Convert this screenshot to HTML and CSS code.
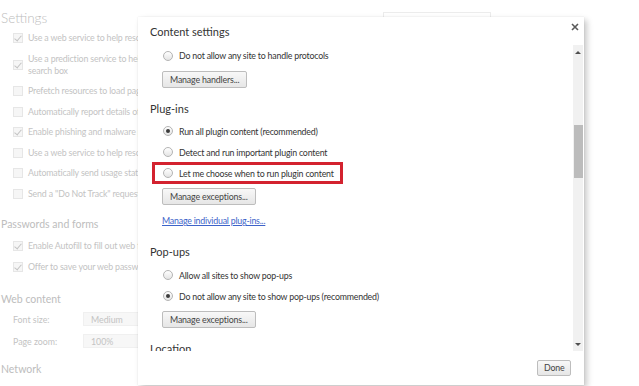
FILE: index.html
```html
<!DOCTYPE html>
<html>
<head>
<meta charset="utf-8">
<link rel="stylesheet" href="styles.css">
</head>
<body>
<div class="page">
  <header class="page-head">
    <h1 class="page-title">Settings</h1>
    <div class="search"></div>
  </header>
  <ul class="checks">
    <li class="check on"><span class="box"></span><span class="ctext">Use a web service to help resolve navigation errors</span></li>
    <li class="check on"><span class="box"></span><span class="ctext">Use a prediction service to help complete searches and URLs typed in the address bar or the app launcher<br>search box</span></li>
    <li class="check"><span class="box"></span><span class="ctext">Prefetch resources to load pages more quickly</span></li>
    <li class="check"><span class="box"></span><span class="ctext">Automatically report details of possible security incidents</span></li>
    <li class="check on"><span class="box"></span><span class="ctext">Enable phishing and malware protection</span></li>
    <li class="check"><span class="box"></span><span class="ctext">Use a web service to help resolve spelling errors</span></li>
    <li class="check"><span class="box"></span><span class="ctext">Automatically send usage statistics and crash reports</span></li>
    <li class="check"><span class="box"></span><span class="ctext">Send a "Do Not Track" request with your browsing traffic</span></li>
  </ul>
  <h2 class="page-sec sec-pw">Passwords and forms</h2>
  <ul class="checks checks-pw">
    <li class="check on"><span class="box"></span><span class="ctext">Enable Autofill to fill out web forms in a single click</span></li>
    <li class="check on"><span class="box"></span><span class="ctext">Offer to save your web passwords</span></li>
  </ul>
  <h2 class="page-sec sec-web">Web content</h2>
  <div class="field f1"><span class="flabel">Font size:</span><span class="select">Medium</span></div>
  <div class="field f2"><span class="flabel">Page zoom:</span><span class="select">100%</span></div>
  <h2 class="page-sec sec-net">Network</h2>
</div>

<div class="dialog">
  <div class="dlg-title">Content settings</div>
  <button class="close" aria-label="Close"><svg width="10" height="10" viewBox="0 0 10 10"><path d="M2 2 L8 8 M8 2 L2 8" stroke="#5a5a5a" stroke-width="1.6" fill="none"/></svg></button>
  <div class="dlg-body">
    <div class="scroll-content">
      <div class="radio"><span class="dot"></span>Do not allow any site to handle protocols</div>
      <button class="btn b1">Manage handlers...</button>

      <h3 class="sec s-plug">Plug-ins</h3>
      <div class="radios r-plug">
        <div class="radio on"><span class="dot"></span>Run all plugin content (recommended)</div>
        <div class="radio"><span class="dot"></span>Detect and run important plugin content</div>
        <div class="radio marked"><span class="dot"></span>Let me choose when to run plugin content</div>
      </div>
      <button class="btn b2">Manage exceptions...</button>
      <a class="link" href="#">Manage individual plug-ins...</a>

      <h3 class="sec s-pop">Pop-ups</h3>
      <div class="radios r-pop">
        <div class="radio"><span class="dot"></span>Allow all sites to show pop-ups</div>
        <div class="radio on"><span class="dot"></span>Do not allow any site to show pop-ups (recommended)</div>
      </div>
      <button class="btn b3">Manage exceptions...</button>

      <h3 class="sec s-loc">Location</h3>
    </div>
    <div class="scrollbar">
      <span class="arrow up"></span>
      <span class="track"><span class="thumb"></span></span>
      <span class="arrow down"></span>
    </div>
  </div>
  <div class="dlg-foot">
    <button class="btn done">Done</button>
  </div>
</div>
</body>
</html>
```

FILE: styles.css
```css
html, body {
  margin: 0;
  padding: 0;
}
body {
  width: 639px;
  height: 386px;
  overflow: hidden;
  background: #ffffff;
  font-family: Lato, "Open Sans", sans-serif;
  position: relative;
}

/* ---------- faded settings page ---------- */
.page {
  color: #c3c3c3;
  white-space: nowrap;
}
.page-head {
  display: flex;
  align-items: flex-start;
  height: 28px;
}
.page-title {
  margin: 9px 0 0 1px;
  font-size: 13.5px;
  line-height: 18px;
  font-weight: 300;
  color: #bdbdbd;
}
.search {
  margin-left: auto;
  margin-right: 148px;
  margin-top: 12px;
  width: 106px;
  height: 20px;
  border: 1px solid #ececec;
}
.checks {
  list-style: none;
  margin: 0;
  padding: 0 0 0 13px;
}
.check {
  display: flex;
  align-items: center;
  padding: 4.25px 0;
  line-height: 12px;
  font-size: 8.8px;
  letter-spacing: -0.15px;
}
.box {
  width: 8px;
  height: 8px;
  border: 1px solid #e6e6e6;
  background: #f6f6f6;
  margin-right: 5px;
  flex: none;
  position: relative;
}
.check.on .box::after {
  content: "";
  position: absolute;
  left: 2px;
  top: 0px;
  width: 3px;
  height: 6px;
  border-right: 1.5px solid #c4c4c4;
  border-bottom: 1.5px solid #c4c4c4;
  transform: rotate(40deg);
}
.page-sec {
  margin: 0 0 0 1px;
  font-size: 10.5px;
  font-weight: 400;
  line-height: 16px;
  color: #bdbdbd;
}
.sec-pw { margin-top: 12px; }
.checks-pw { margin-top: 4px; }
.sec-web { margin-top: 14px; }
.field {
  display: flex;
  align-items: center;
  padding-left: 13px;
  height: 14px;
  font-size: 8.8px;
}
.f1 { margin-top: 5px; }
.f2 { margin-top: 8px; }
.flabel { width: 70px; }
.select {
  height: 14px;
  line-height: 14px;
  width: 60px;
  padding-left: 7px;
  background: #f7f7f7;
  border: 1px solid #f0f0f0;
  box-sizing: border-box;
}
.sec-net { margin-top: 13px; }

/* ---------- dialog ---------- */
.dialog {
  position: absolute;
  left: 138px;
  top: 17px;
  width: 446px;
  height: 368px;
  background: #ffffff;
  box-shadow: 0 0 1px rgba(0,0,0,0.12), 3px 3px 6px rgba(0,0,0,0.22);
  display: flex;
  flex-direction: column;
  color: #333333;
}
.dialog > * { flex: none; }
.dlg-title {
  padding: 8px 0 0 12px;
  height: 20px;
  line-height: 14px;
  font-size: 11px;
  color: #333;
}
.close {
  position: absolute;
  top: 5px;
  right: 4px;
  width: 10px;
  height: 10px;
  padding: 0;
  border: 0;
  background: none;
  display: flex;
}
.dlg-body {
  height: 306px;
  display: flex;
}
.scroll-content {
  flex: 1;
  overflow: hidden;
  display: flex;
  flex-direction: column;
  align-items: flex-start;
}
.scroll-content > * { flex: none; }
.radio {
  position: relative;
  display: flex;
  align-items: center;
  height: 21px;
  margin-left: 25px;
  font-size: 8.8px;
  letter-spacing: -0.2px;
  color: #333;
  white-space: nowrap;
}
.dot {
  width: 8px;
  height: 8px;
  border-radius: 50%;
  border: 1px solid #b4b4b4;
  background: linear-gradient(#ffffff, #e4e4e4);
  margin-right: 6px;
  position: relative;
  flex: none;
}
.radio.on .dot::after {
  content: "";
  position: absolute;
  left: 2px;
  top: 2px;
  width: 4px;
  height: 4px;
  border-radius: 50%;
  background: #3c3c3c;
}
.radio.marked::before {
  content: "";
  position: absolute;
  left: -11px;
  top: -1px;
  width: 191px;
  height: 22px;
  border: 3px solid #d3222f;
  box-sizing: border-box;
}
.btn {
  font-family: inherit;
  font-size: 8.8px;
  letter-spacing: -0.15px;
  color: #444;
  height: 17px;
  padding: 0 7px;
  border: 1px solid #bdbdbd;
  border-radius: 2px;
  background: linear-gradient(#f8f8f8, #e6e6e6);
  line-height: 15px;
  margin-left: 24px;
}
.b1 { margin-top: 5px; }
.sec {
  margin: 0 0 0 12px;
  font-size: 11px;
  font-weight: 400;
  line-height: 14px;
  color: #333;
}
.s-plug { margin-top: 14px; }
.r-plug { margin-top: 4.5px; }
.b2 { margin-top: 4.5px; }
.link {
  margin: 9px 0 0 24px;
  font-size: 8.8px;
  letter-spacing: -0.2px;
  line-height: 14px;
  color: #3d63c9;
  text-decoration: underline;
}
.s-pop { margin-top: 17px; }
.r-pop { margin-top: 5.5px; }
.b3 { margin-top: 4.5px; }
.s-loc { margin-top: 14px; }

.scrollbar {
  width: 10px;
  margin-right: 1px;
  background: #f1f1f1;
  display: flex;
  flex-direction: column;
  align-items: center;
}
.arrow {
  height: 14px;
  flex: none;
  display: flex;
  align-items: center;
}
.arrow.up::before {
  content: "";
  border-left: 3px solid transparent;
  border-right: 3px solid transparent;
  border-bottom: 3px solid #505050;
}
.arrow.down::before {
  content: "";
  border-left: 3px solid transparent;
  border-right: 3px solid transparent;
  border-top: 3px solid #505050;
}
.track {
  flex: 1;
  width: 100%;
  display: flex;
  flex-direction: column;
  align-items: flex-end;
}
.thumb {
  margin-top: 66px;
  width: 9px;
  height: 53px;
  background: #bcbcbc;
}
.dlg-foot {
  display: flex;
  justify-content: flex-end;
  padding: 9px 13px 0 0;
}
.done {
  margin: 0;
  height: 16px;
  line-height: 14px;
  padding: 0 6px;
  width: 34px;
}
```
